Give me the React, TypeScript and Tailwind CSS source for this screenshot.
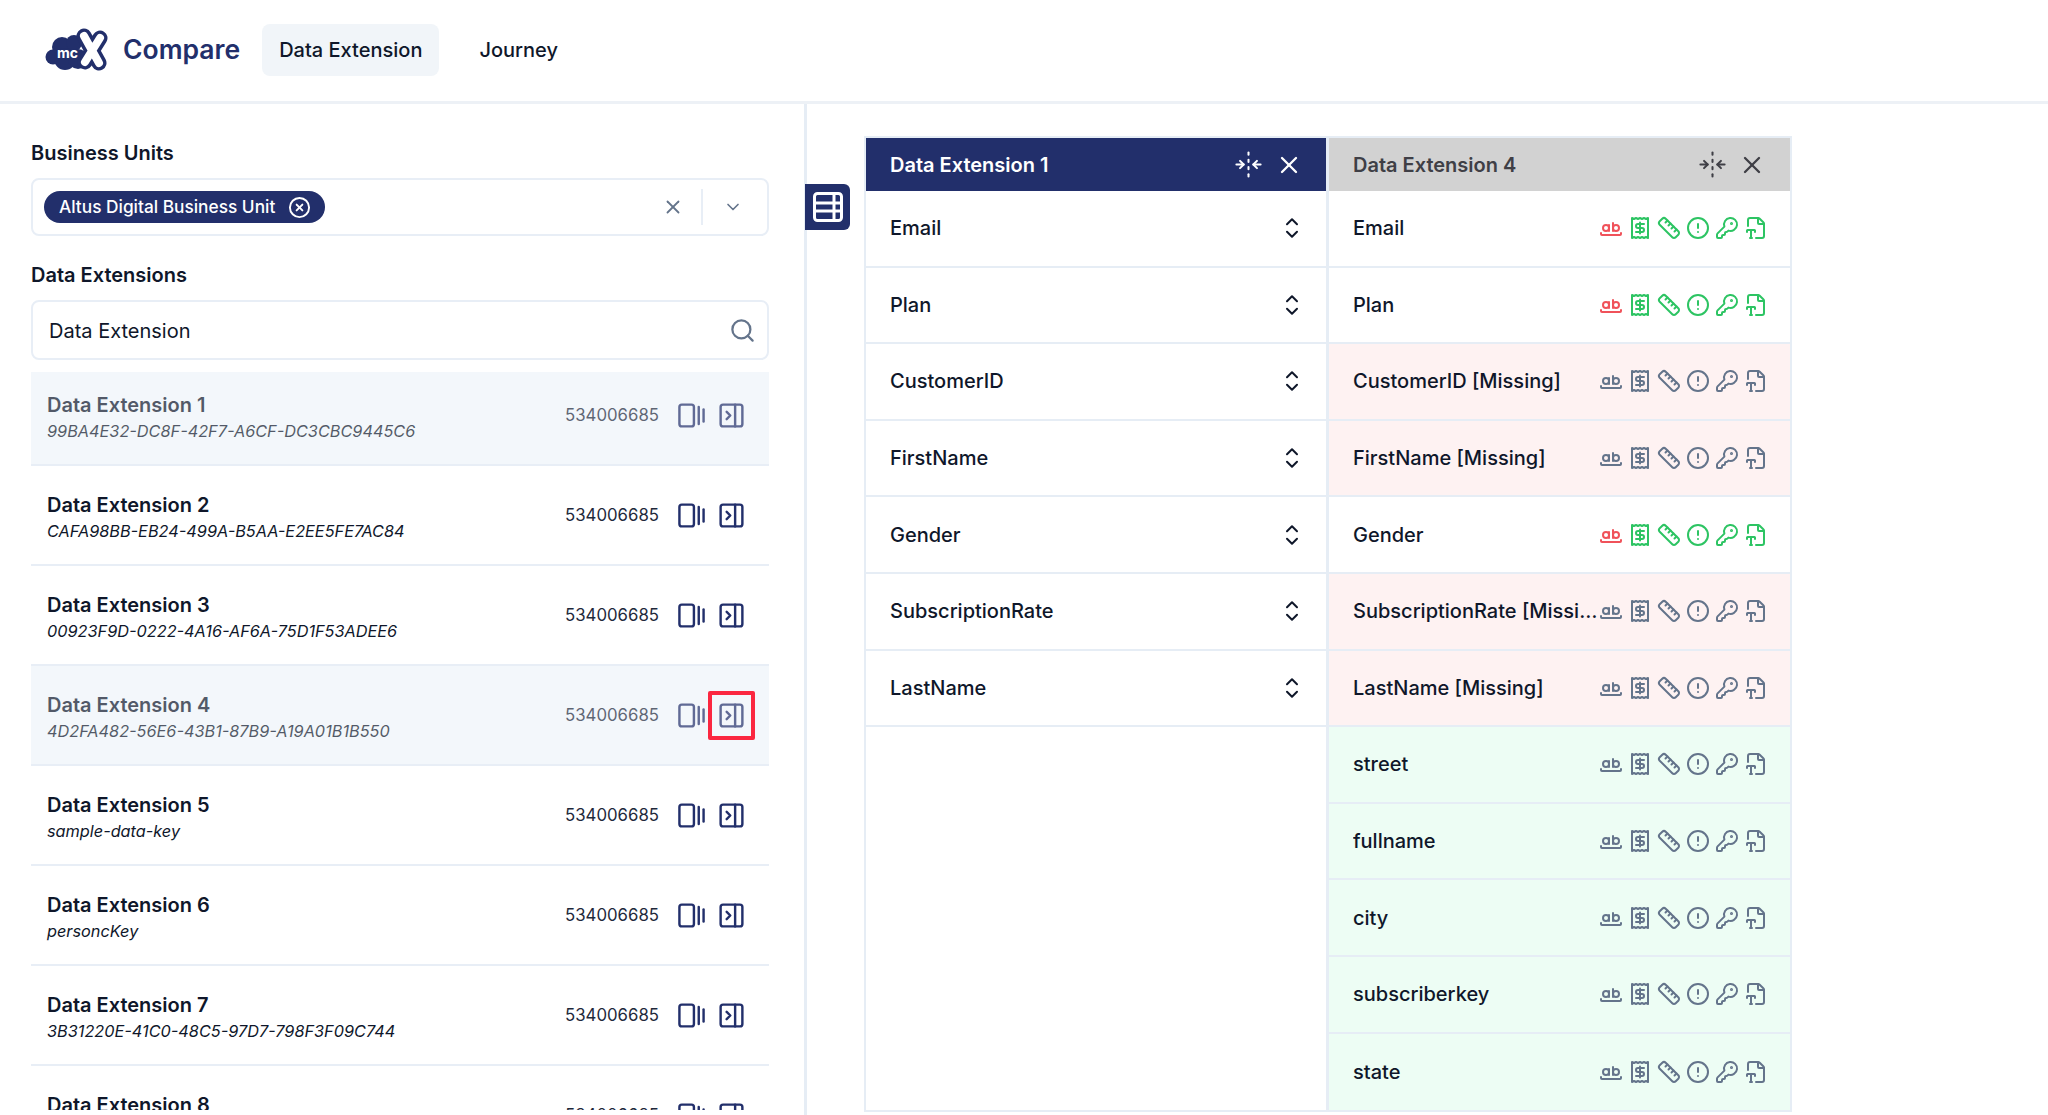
import { ChevronDown, CircleAlert, CircleX, FileType2, FoldHorizontal, GalleryHorizontalEnd, KeyRound, PanelRightClose, Receipt, Ruler, Search, WholeWord, X } from "lucide-react";

const extensions = [
  { name: "Data Extension 1", key: "99BA4E32-DC8F-42F7-A6CF-DC3CBC9445C6", active: true },
  { name: "Data Extension 2", key: "CAFA98BB-EB24-499A-B5AA-E2EE5FE7AC84" },
  { name: "Data Extension 3", key: "00923F9D-0222-4A16-AF6A-75D1F53ADEE6" },
  { name: "Data Extension 4", key: "4D2FA482-56E6-43B1-87B9-A19A01B1B550", active: true, marked: true },
  { name: "Data Extension 5", key: "sample-data-key" },
  { name: "Data Extension 6", key: "personcKey" },
  { name: "Data Extension 7", key: "3B31220E-41C0-48C5-97D7-798F3F09C744" },
  { name: "Data Extension 8", key: "" },
];

const leftFields = ["Email", "Plan", "CustomerID", "FirstName", "Gender", "SubscriptionRate", "LastName"];

const rightFields = [
  { name: "Email", state: "ok" },
  { name: "Plan", state: "ok" },
  { name: "CustomerID [Missing]", state: "missing" },
  { name: "FirstName [Missing]", state: "missing" },
  { name: "Gender", state: "ok" },
  { name: "SubscriptionRate [Missing]", state: "missing" },
  { name: "LastName [Missing]", state: "missing" },
  { name: "street", state: "new" },
  { name: "fullname", state: "new" },
  { name: "city", state: "new" },
  { name: "subscriberkey", state: "new" },
  { name: "state", state: "new" },
];

const Logo = () => (
  <svg width="64" height="44" viewBox="0 0 64 44">
    <g fill="#222f6b">
      <circle cx="8" cy="29" r="7.5" />
      <circle cx="17" cy="19" r="10" />
      <circle cx="29" cy="15" r="8" />
      <circle cx="20" cy="31" r="11" />
      <circle cx="33" cy="31" r="10" />
    </g>
    <g fill="none" strokeLinecap="round">
      <path d="M39 8L54 35M55 10L40 34" stroke="#222f6b" strokeWidth="15" />
      <path d="M39 8L54 35M55 10L40 34" stroke="#fff" strokeWidth="8" />
    </g>
    <text x="12" y="30" fill="#fff" fontSize="14" fontWeight="700" fontFamily="Inter, sans-serif">mc</text>
  </svg>
);

const TableIcon = () => (
  <svg width="30" height="30" viewBox="0 0 30 30" fill="none" stroke="#fff" strokeWidth="3">
    <rect x="1.5" y="1.5" width="27" height="27" rx="3" />
    <path d="M2 11h26M2 19h26M21 2v26" />
  </svg>
);

const Selector = () => (
  <svg width="30" height="30" viewBox="0 0 24 24" fill="none" stroke="#0f172a" strokeWidth="1.6" strokeLinecap="round" strokeLinejoin="round">
    <path d="M8 9l4-4 4 4M16 15l-4 4-4-4" />
  </svg>
);

const ListRow = ({ name, fieldKey, active, marked, first }: { name: string; fieldKey: string; active?: boolean; marked?: boolean; first?: boolean }) => (
  <div className={`flex h-[100px] shrink-0 items-center border-b-2 border-[#e8eef6] pl-[16px] pr-[23px] ${active ? "bg-[#f3f7fb]" : ""} ${first ? "-mt-[6px]" : ""}`}>
    <div className={`flex-1 pt-[3px] ${active ? "opacity-70" : ""}`}>
      <div className="text-[20px] leading-[28px] font-semibold text-[#0f172a]">{name}</div>
      <div className="min-h-[24px] text-[16.3px] leading-[24px] italic text-[#0f172a]">{fieldKey}</div>
    </div>
    <div className={`mr-[18px] pt-[2px] text-[16.8px] text-[#1e293b] ${active ? "opacity-70" : ""}`}>534006685</div>
    <div className="flex items-center gap-[11px]">
      <GalleryHorizontalEnd size={29} className={`-scale-x-100 text-[#222f6b] ${active ? "opacity-70" : ""}`} />
      <div className="relative">
        <PanelRightClose size={29} className={`text-[#222f6b] ${active ? "opacity-70" : ""}`} />
        {marked && <div className="absolute -top-[10px] -left-[9px] h-[49px] w-[47px] rounded-[2px] border-4 border-[#fb2740]" />}
      </div>
    </div>
  </div>
);

const FieldIcons = ({ state }: { state: string }) => {
  const ok = state === "ok";
  const base = ok ? "text-[#2dc463]" : "text-[#64748b]";
  return (
    <div className="flex shrink-0 items-center gap-[5px]">
      <WholeWord size={24} className={ok ? "text-[#f0525a]" : "text-[#64748b]"} />
      <Receipt size={24} className={base} />
      <Ruler size={24} className={base} />
      <CircleAlert size={24} className={base} />
      <KeyRound size={24} className={base} />
      <FileType2 size={24} className={base} />
    </div>
  );
};

const App = () => {
  return (
    <div className="flex h-[1115px] w-[2048px] flex-col overflow-hidden bg-white font-['Inter',sans-serif] text-[#0f172a]">
      <header className="flex h-[104px] shrink-0 items-center border-b-[3px] border-[#edf1f6] pb-[2px] pl-[45px]">
        <Logo />
        <span className="ml-[14px] text-[26.5px] font-semibold text-[#222f6b]">Compare</span>
        <div className="ml-[22px] flex h-[52px] items-center rounded-lg bg-[#f1f5f9] px-[17px] text-[20px] font-medium">Data Extension</div>
        <div className="ml-[40px] text-[20px] font-medium">Journey</div>
      </header>
      <div className="flex min-h-0 flex-1">
        <aside className="flex w-[807px] shrink-0 flex-col border-r-[3px] border-[#e6edf5] pl-[31px] pr-[35px] pb-[5px]">
          <div className="mt-[35px] text-[20px] leading-[28px] font-semibold">Business Units</div>
          <div className="mt-[11px] flex h-[58px] items-center rounded-lg border-2 border-[#e8eef6] pl-[11px]">
            <div className="flex h-[32px] items-center gap-[13px] rounded-full bg-[#222f6b] pr-[14px] pl-[15px] text-[17.3px] font-medium text-white">
              Altus Digital Business Unit
              <CircleX size={23} />
            </div>
            <X size={22} className="ml-auto text-[#64748b]" />
            <div className="ml-[17px] h-[36px] w-[2px] bg-[#e8eef6]" />
            <ChevronDown size={20} className="mr-[24px] ml-[20px] text-[#64748b]" />
          </div>
          <div className="mt-[25px] text-[20px] leading-[28px] font-semibold">Data Extensions</div>
          <div className="mt-[11px] flex h-[60px] shrink-0 items-center rounded-lg border-2 border-[#e8eef6] pr-[11px] pl-[16px]">
            <span className="flex-1 pt-[1px] text-[20px]">Data Extension</span>
            <Search size={27} className="text-[#64748b]" />
          </div>
          <div className="mt-[12px] flex min-h-0 flex-1 flex-col overflow-hidden">
            {extensions.map((e, i) => (
              <ListRow key={e.name} name={e.name} fieldKey={e.key} active={e.active} marked={e.marked} first={i === 0} />
            ))}
          </div>
        </aside>
        <main className="flex-1 pt-[32px] pl-[57px]">
          <div className="relative flex w-[928px] border-2 border-[#e6edf5]">
            <button className="absolute top-[46px] -left-[61px] flex h-[46px] w-[45px] items-center justify-center rounded-r-md bg-[#222f6b]">
              <TableIcon />
            </button>
            <section className="w-[463px] shrink-0 border-r-[3px] border-[#e6edf5]">
              <div className="flex h-[53px] items-center bg-[#222f6b] pr-[23px] pl-[24px] text-white">
                <span className="flex-1 text-[20px] font-semibold">Data Extension 1</span>
                <FoldHorizontal size={29} className="mr-[12px]" strokeWidth={1.7} />
                <X size={28} />
              </div>
              {leftFields.map((f) => (
                <div key={f} className="flex h-[76.6px] items-center border-b-2 border-[#e6edf5] pr-[19px] pl-[24px] text-[20px] font-medium">
                  <span className="flex-1">{f}</span>
                  <Selector />
                </div>
              ))}
            </section>
            <section className="min-w-0 flex-1">
              <div className="flex h-[53px] items-center bg-[#d2d2d2] pr-[24px] pl-[24px] text-[#3f3f46]">
                <span className="flex-1 text-[20px] font-semibold">Data Extension 4</span>
                <FoldHorizontal size={29} className="mr-[11px]" strokeWidth={1.7} />
                <X size={28} />
              </div>
              {rightFields.map((f) => (
                <div
                  key={f.name}
                  className={`flex h-[76.6px] items-center border-b-2 border-[#e6edf5] pr-[22px] pl-[24px] text-[20px] font-medium last:border-b-0 ${f.state === "missing" ? "bg-[#fef2f2]" : f.state === "new" ? "bg-[#edfdf4]" : ""}`}
                >
                  <span className="min-w-0 flex-1 truncate">{f.name}</span>
                  <FieldIcons state={f.state} />
                </div>
              ))}
            </section>
          </div>
        </main>
      </div>
    </div>
  );
};

export default App;
